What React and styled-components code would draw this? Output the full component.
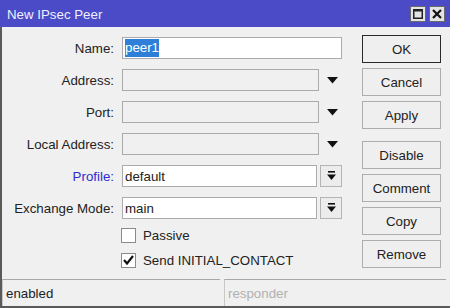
import React from "react";
import styled, { createGlobalStyle } from "styled-components";

const Global = createGlobalStyle`
  html, body { margin: 0; padding: 0; background: #f0f0f0; }
  body { font-family: "Liberation Sans", Arial, sans-serif; }
`;

const Window = styled.div`
  width: 450px;
  height: 308px;
  box-sizing: border-box;
  display: flex;
  flex-direction: column;
  background: #f0f0f0;
  font-family: "Liberation Sans", Arial, sans-serif;
  font-size: 13.3px;
  color: #222;
  overflow: hidden;
`;

const TitleBar = styled.div`
  height: 27px;
  flex: none;
  background: #4b4bc7;
  display: flex;
  align-items: center;
  padding: 0 5px 0 7px;
  box-sizing: border-box;
`;

const Title = styled.div`
  flex: 1;
  color: #eef0ff;
  font-size: 13.3px;
  padding-top: 1px;
`;

const TitleButtons = styled.div`
  display: flex;
  gap: 3px;
`;

const TitleButton = styled.div`
  width: 16px;
  height: 16px;
  box-sizing: border-box;
  background: #e4e4e4;
  border: 1px solid #6a6a6a;
  display: flex;
  align-items: center;
  justify-content: center;
`;

const Frame = styled.div`
  flex: 1;
  display: flex;
  flex-direction: column;
  border-left: 2px solid #5a5a5a;
  border-bottom: 2px solid #5a5a5a;
  min-height: 0;
`;

const Body = styled.div`
  flex: 1;
  display: flex;
  padding-top: 10px;
`;

const Form = styled.div`
  width: 340px;
  display: flex;
  flex-direction: column;
  gap: 10px;
`;

const Row = styled.div`
  display: grid;
  grid-template-columns: 112px 220px;
  column-gap: 8px;
  align-items: center;
  height: 22px;
`;

const CheckRow = styled.div`
  display: flex;
  align-items: center;
  gap: 7px;
  margin-left: 119px;
  height: 14px;
  margin-top: ${(p) => p.$mt || 0}px;
`;

const Label = styled.div`
  text-align: right;
  white-space: nowrap;
  color: ${(p) => (p.$link ? "#2d2dcf" : "#222")};
`;

const FieldWrap = styled.div`
  display: flex;
  align-items: center;
  height: 22px;
  gap: ${(p) => p.$gap || 0}px;
`;

const Input = styled.div`
  box-sizing: border-box;
  height: 22px;
  width: ${(p) => p.$w}px;
  flex: none;
  border: 1px solid #ababab;
  background: ${(p) => (p.$disabled ? "#f0f0f0" : "#ffffff")};
  display: flex;
  align-items: center;
  padding-left: 2px;
  white-space: nowrap;
`;

const Selected = styled.span`
  background: #2f7fd8;
  color: #fff;
  padding: 1px 0 2px;
`;

const ArrowArea = styled.div`
  flex: 1;
  display: flex;
  align-items: center;
  justify-content: center;
  padding-left: 4px;
`;

const SmallButton = styled.div`
  box-sizing: border-box;
  width: 22px;
  height: 22px;
  border: 1px solid #b4b4b4;
  background: #ececec;
  display: flex;
  align-items: center;
  justify-content: center;
`;

const Box = styled.div`
  box-sizing: border-box;
  width: 15px;
  height: 15px;
  border: 1px solid #8a8a8a;
  background: #fff;
  display: flex;
  align-items: center;
  justify-content: center;
`;

const Buttons = styled.div`
  margin-left: 20px;
  padding-top: -2px;
  display: flex;
  flex-direction: column;
  gap: 5px;
  margin-top: -2px;
`;

const Button = styled.div`
  box-sizing: border-box;
  width: 79px;
  height: 28px;
  border: 1px solid ${(p) => (p.$default ? "#2a2a2a" : "#adadad")};
  background: #efefef;
  display: flex;
  align-items: center;
  justify-content: center;
  color: #222;
  margin-top: ${(p) => p.$mt || 0}px;
`;

const StatusBar = styled.div`
  height: 27px;
  flex: none;
  display: flex;
  gap: 4px;
  padding-right: 4px;
`;

const StatusField = styled.div`
  box-sizing: border-box;
  width: ${(p) => p.$w}px;
  height: 27px;
  border-top: 1px solid #a8a8a8;
  border-left: 1px solid #c8c8c8;
  display: flex;
  align-items: center;
  padding-left: 3px;
  padding-top: 1px;
  color: ${(p) => (p.$muted ? "#b0b0b0" : "#222")};
`;

const Down = () => (
  <svg width="11" height="7" viewBox="0 0 11 7">
    <polygon points="0,0 11,0 5.5,6.5" fill="#111" />
  </svg>
);

const DownBar = () => (
  <svg width="9" height="10" viewBox="0 0 9 10">
    <rect x="1" y="0" width="7" height="1.6" fill="#111" />
    <polygon points="0,3.5 9,3.5 4.5,9" fill="#111" />
  </svg>
);

const Check = () => (
  <svg width="11" height="10" viewBox="0 0 11 10">
    <path d="M1 5 L4 8.5 L10 1" stroke="#111" strokeWidth="2.2" fill="none" />
  </svg>
);

const MaxIcon = () => (
  <svg width="10" height="10" viewBox="0 0 10 10">
    <rect x="0.75" y="0.75" width="8.5" height="8.5" fill="none" stroke="#222" strokeWidth="1.5" />
    <rect x="0" y="0" width="10" height="2.5" fill="#222" />
  </svg>
);

const CloseIcon = () => (
  <svg width="10" height="10" viewBox="0 0 10 10">
    <path d="M1 1 L9 9 M9 1 L1 9" stroke="#111" strokeWidth="2.2" />
  </svg>
);

export default function App() {
  return (
    <>
      <Global />
      <Window>
        <TitleBar>
          <Title>New IPsec Peer</Title>
          <TitleButtons>
            <TitleButton><MaxIcon /></TitleButton>
            <TitleButton><CloseIcon /></TitleButton>
          </TitleButtons>
        </TitleBar>
        <Frame>
          <Body>
            <Form>
              <Row>
                <Label>Name:</Label>
                <FieldWrap>
                  <Input $w={220}><Selected>peer1</Selected></Input>
                </FieldWrap>
              </Row>
              <Row>
                <Label>Address:</Label>
                <FieldWrap>
                  <Input $w={197} $disabled />
                  <ArrowArea><Down /></ArrowArea>
                </FieldWrap>
              </Row>
              <Row>
                <Label>Port:</Label>
                <FieldWrap>
                  <Input $w={197} $disabled />
                  <ArrowArea><Down /></ArrowArea>
                </FieldWrap>
              </Row>
              <Row>
                <Label>Local Address:</Label>
                <FieldWrap>
                  <Input $w={197} $disabled />
                  <ArrowArea><Down /></ArrowArea>
                </FieldWrap>
              </Row>
              <Row>
                <Label $link>Profile:</Label>
                <FieldWrap $gap={3}>
                  <Input $w={195}>default</Input>
                  <SmallButton><DownBar /></SmallButton>
                </FieldWrap>
              </Row>
              <Row>
                <Label>Exchange Mode:</Label>
                <FieldWrap $gap={3}>
                  <Input $w={195}>main</Input>
                  <SmallButton><DownBar /></SmallButton>
                </FieldWrap>
              </Row>
              <CheckRow $mt={-1}>
                <Box />
                <span>Passive</span>
              </CheckRow>
              <CheckRow $mt={1}>
                <Box><Check /></Box>
                <span>Send INITIAL_CONTACT</span>
              </CheckRow>
            </Form>
            <Buttons>
              <Button $default>OK</Button>
              <Button>Cancel</Button>
              <Button>Apply</Button>
              <Button $mt={7}>Disable</Button>
              <Button>Comment</Button>
              <Button>Copy</Button>
              <Button>Remove</Button>
            </Buttons>
          </Body>
          <StatusBar>
            <StatusField $w={218}>enabled</StatusField>
            <StatusField $w={222} $muted>responder</StatusField>
          </StatusBar>
        </Frame>
      </Window>
    </>
  );
}
